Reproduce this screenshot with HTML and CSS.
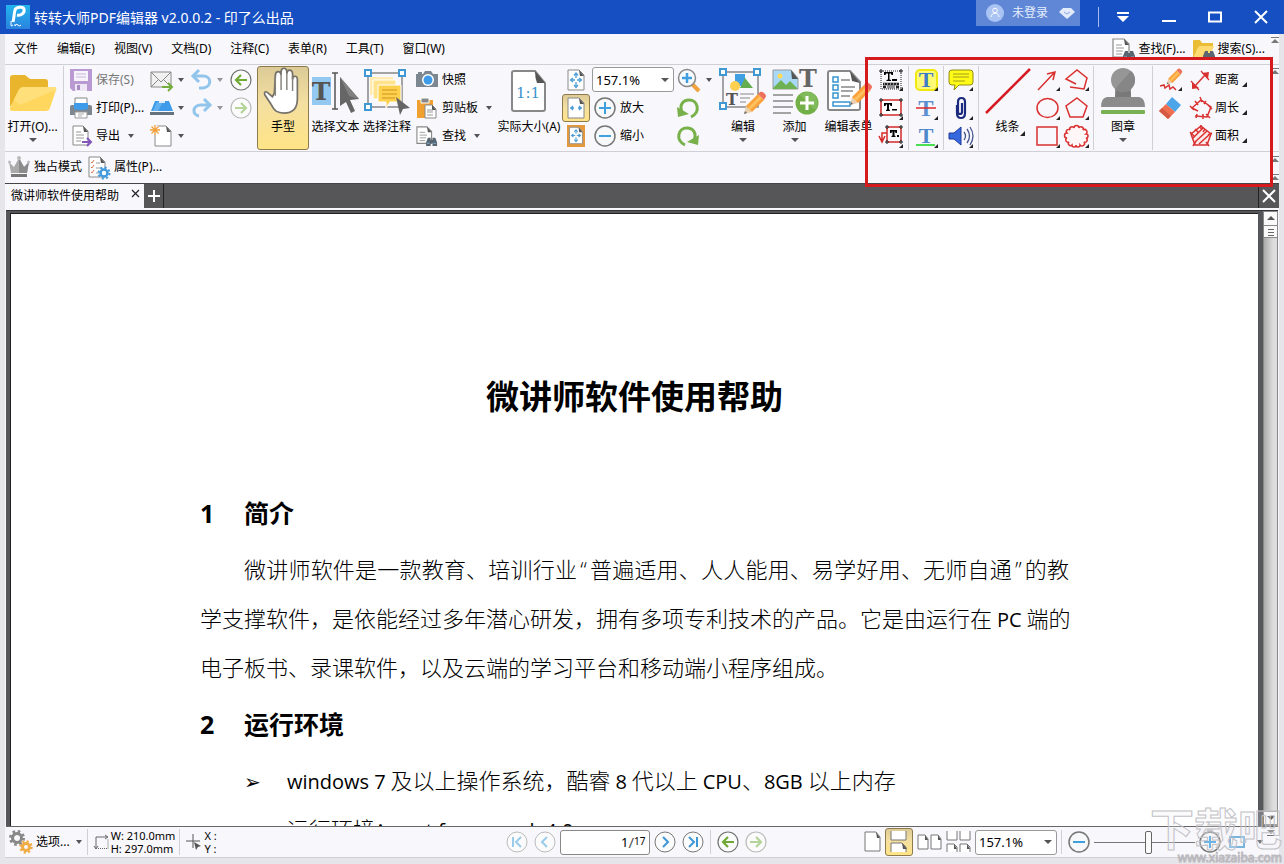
FILE: index.html
```html
<!DOCTYPE html>
<html lang="zh-CN">
<head>
<meta charset="utf-8">
<title>转转大师PDF编辑器</title>
<link rel="stylesheet" href="styles.css">
</head>
<body>
<svg class="defs" aria-hidden="true">
  <symbol id="tri" viewBox="0 0 5 5"><path d="M5 0v5H0z" fill="#222"/></symbol>
  <symbol id="circle-left" viewBox="0 0 22 22"><circle cx="11" cy="11" r="10" fill="#fbfbfc" stroke="#6f7470" stroke-width="1.2"/><path d="M17 11H6M11 6l-5 5 5 5" fill="none" stroke="#6faa35" stroke-width="2.2"/></symbol>
  <symbol id="circle-right" viewBox="0 0 22 22"><circle cx="11" cy="11" r="10" fill="#fbfbfc" stroke="#b9bbb9" stroke-width="1.2"/><path d="M5 11h11M11 6l5 5-5 5" fill="none" stroke="#b5d49a" stroke-width="2.2"/></symbol>
  <symbol id="plus" viewBox="0 0 22 22"><circle cx="11" cy="11" r="10" fill="#f7f8fa" stroke="#777" stroke-width="1.5"/><path d="M11 5v12M5 11h12" stroke="#3f9fdf" stroke-width="2"/></symbol>
  <symbol id="minus" viewBox="0 0 22 22"><circle cx="11" cy="11" r="10" fill="#f7f8fa" stroke="#777" stroke-width="1.5"/><path d="M5 11h12" stroke="#3f9fdf" stroke-width="2"/></symbol>
  <symbol id="find" viewBox="0 0 24 22"><path d="M1 1h11l5 5v13H1z" fill="#fff" stroke="#888" stroke-width="1.2"/><path d="M12 1l5 6h-4z" fill="#555"/><path d="M4 7h6M4 10h8M4 13h7M4 16h6" stroke="#999"/><path d="M13 13h3v2h2v-2h3l2 5v4h-5v-3h-2v3h-5v-4z" fill="#596671"/><path d="M12 19h3M19 19h3" stroke="#7fb2df"/></symbol>
  <symbol id="chev" viewBox="0 0 8 7"><path d="M0 .5h8" stroke="#777"/><path d="M4 2l4 4H0z" fill="#777"/></symbol>
  <symbol id="pencil" viewBox="0 0 24 24"><path d="M1 23l2-8 6 6z" fill="#ead0b0"/><path d="M1 23l1-3 2 2z" fill="#666"/><path d="M3 15L15 3l6 6L9 21z" fill="#f9a33d"/><path d="M5 17L17 5l2 2L7 19z" fill="#ffc05f"/><path d="M15 3l2-2q2-1 4 1l1 1q2 2 0 4l-1 2z" fill="#ed715d"/></symbol>
  <symbol id="fitpage" viewBox="0 0 22 22"><path d="M3 1h11l5 5v15H3z" fill="#fff" stroke="#888"/><path d="M14 1l5 6h-4z" fill="#555"/><path d="M11 5v4M11 13v5M6 11h4M12 11h4" stroke="#4a9cd3" stroke-width="1.300"/><path d="M9 6.500l2-2.500 2 2.500M9 16l2 2.500 2-2.500M8 9l-2.500 2L8 13M14 9l2.500 2-2.500 2" fill="none" stroke="#4a9cd3" stroke-width="1.300"/></symbol>
</svg>

<header class="titlebar">
  <svg class="logo" width="24" height="24" viewBox="0 0 24 24"><defs><linearGradient id="lg" x2="0" y2="1"><stop stop-color="#23b4ee"/><stop offset="1" stop-color="#2a83df"/></linearGradient></defs><path d="M0 0h24v24H0z" fill="url(#lg)"/><path d="M7 17C8 13 8 9 9 5c1-3 8-4 9-1 1 4-3 7-7 6" fill="none" stroke="#fff" stroke-width="3"/><path d="M5 16v4q0 2 2 0M9 21v-2M9 21q2-3 3-1t3 0" fill="none" stroke="#fff"/></svg>
  <h1 class="app-title">转转大师PDF编辑器 v2.0.0.2 - 印了么出品</h1>
  <button class="user"><svg width="18" height="18" viewBox="0 0 18 18"><circle cx="9" cy="9" r="9" fill="#a9c3f3"/><circle cx="9" cy="6.500" r="2.300" fill="none" stroke="#fff"/><path d="M5 13c0-5 8-5 8 0" fill="none" stroke="#fff"/></svg><span>未登录</span><svg width="16" height="12" viewBox="0 0 16 12"><path d="M4 1h8l4 4-8 7-8-7z" fill="#e2ebfb"/><path d="M5 5l3 2 3-2" fill="none" stroke="#86a6e2"/></svg></button>
  <i class="title-sep"></i>
  <button class="win" aria-label="菜单"><svg width="14" height="12"><path d="M1 1h12v2H1zM1 5h12l-6 6z" fill="#fff"/></svg></button>
  <button class="win" aria-label="最小化"><svg width="14" height="12"><path d="M0 9h14v2H0z" fill="#fff"/></svg></button>
  <button class="win" aria-label="最大化"><svg width="14" height="12"><path d="M1 1.500h12v9H1z" fill="none" stroke="#fff" stroke-width="2"/></svg></button>
  <button class="win" aria-label="关闭"><svg width="14" height="14"><path d="M1 1l12 12M13 1L1 13" stroke="#fff" stroke-width="2"/></svg></button>
</header>

<main class="frame">
  <nav class="menubar">
    <button>文件</button><button>编辑(E)</button><button>视图(V)</button><button>文档(D)</button><button>注释(C)</button><button>表单(R)</button><button>工具(T)</button><button>窗口(W)</button>
    <div class="menu-right">
      <button><svg width="24" height="22"><use href="#find"/></svg>查找(F)...</button>
      <button><svg width="24" height="22" viewBox="0 0 24 22"><path d="M1 3q0-1 1-1h6l2 3h11v5H6L2 19H1z" fill="#ebbd36"/><path d="M7 8h15l-4 11H2z" fill="#ffda70"/><path d="M13 13h3v2h2v-2h3l2 5v4h-5v-3h-2v3h-5v-4z" fill="#596671"/></svg>搜索(S)...</button>
      <svg class="menu-chev" width="8" height="7"><use href="#chev"/></svg>
    </div>
  </nav>

  <section class="toolbar">
    <div class="cell sep"><button class="big open"><svg width="48" height="44" viewBox="0 0 48 44"><path d="M1 9q0-3 3-3h12l5 4h15q3 0 3 3v8H12L1 38z" fill="#e9b52c"/><path d="M14 18h31q3 0 2 3l-6 18q-1 3-4 3H4q-4 0-3-3L9 22q2-4 5-4z" fill="#ffd75e"/><path d="M14 18h31q3 0 2 3L11 36 5 31l5-10q2-3 4-3z" fill="#ffdf79"/></svg><span>打开(O)...</span><i class="down"></i></button></div>

    <div class="cell pad6">
      <button class="row muted"><svg width="22" height="22" viewBox="0 0 22 22"><path d="M0 0h22v22H3l-3-3z" fill="#b99ad2"/><path d="M4 2h14v10H4z" fill="#f7f3fa"/><path d="M6 5h10M6 8h10" stroke="#c9b8d9"/><path d="M5 15h12v7H5z" fill="#eee6f4"/><path d="M7 16h3v5H7z" fill="#a88bc3"/></svg>保存(S)</button>
      <button class="row"><svg width="22" height="22" viewBox="0 0 22 22"><path d="M5 1h12v7H5z" fill="#fff" stroke="#888"/><path d="M2 8h18q2 0 2 2v8H0v-8q0-2 2-2z" fill="#7d8791"/><path d="M4 6h14v6q-7 2-14 0z" fill="#3d9be9"/><path d="M5 15h12v6H5z" fill="#fff" stroke="#999"/><path d="M8 17h6M8 19h4" stroke="#aaa"/></svg>打印(P)...</button>
      <button class="row"><svg width="22" height="22" viewBox="0 0 22 22"><path d="M3 1h10l5 5v14H3z" fill="#fff" stroke="#888"/><path d="M13 1l5 6h-4z" fill="#555"/><path d="M6 7h5M6 10h8M6 13h8M6 16h5" stroke="#999"/><path d="M12 17h8M17 13l4 4-4 4" fill="none" stroke="#8155b9" stroke-width="2"/></svg>导出<i class="down"></i></button>
    </div>
    <div class="cell pad3">
      <button class="row wide" aria-label="邮件"><svg width="24" height="22" viewBox="0 0 24 22"><path d="M1 3h20v15H1z" fill="#f1f1f1" stroke="#888"/><path d="M1 3l10 10L21 3M1 18l8-8M21 18l-8-8" fill="none" stroke="#888"/><path d="M12 18h9M18 14l4 4-4 4" fill="none" stroke="#73ad3d" stroke-width="2"/></svg><i class="down"></i></button>
      <button class="row wide" aria-label="扫描"><svg width="24" height="22" viewBox="0 0 24 22"><path d="M5 4h14l4 10H1z" fill="#3d9be9"/><path d="M7 5h6L8 14H3z" fill="#63b1ef"/><path d="M9 5h6" stroke="#d9ecfb" stroke-width="2"/><path d="M0 15h24v3H0z" fill="#65737f"/></svg><i class="down"></i></button>
      <button class="row wide" aria-label="新建"><svg width="24" height="22" viewBox="0 0 24 22"><path d="M5 1h11l5 5v15H5z" fill="#fff" stroke="#888"/><path d="M16 1l5 6h-4z" fill="#555"/><circle cx="5" cy="5" r="5" fill="#f8f7fb"/><path d="M5 0v10M0 5h10M1.500 1.500l7 7M8.500 1.500l-7 7" stroke="#efa13b" stroke-width="1.300"/></svg><i class="down"></i></button>
    </div>
    <div class="cell pad3">
      <button class="row wide pale" aria-label="撤销"><svg width="22" height="22" viewBox="0 0 22 22"><path d="M3 7h9c9 0 9 11 0 12H8" fill="none" stroke="#92c5ec" stroke-width="3"/><path d="M8 1L2 7l6 6" fill="none" stroke="#92c5ec" stroke-width="3"/></svg><i class="down"></i></button>
      <button class="row wide pale" aria-label="重做"><svg width="22" height="22" viewBox="0 0 22 22"><path d="M18 8h-8C1 8 1 18 8 19" fill="none" stroke="#92c5ec" stroke-width="3"/><path d="M13 2l6 6-6 6" fill="none" stroke="#92c5ec" stroke-width="3"/></svg><i class="down"></i></button>
    </div>
    <div class="cell pad2">
      <button class="row" aria-label="后退"><svg width="22" height="22"><use href="#circle-left"/></svg></button>
      <button class="row" aria-label="前进"><svg width="22" height="22"><use href="#circle-right"/></svg></button>
    </div>

    <div class="cell"><button class="big on"><svg width="44" height="48" viewBox="0 0 44 48"><path d="M11 30L5 25q-3-1-2 3l6 9c4 8 7 10 14 10 9 0 14-5 14-15V12c0-5-5-4-5 0V6c0-5-6-5-6 0V4c0-5-6-5-6 0v3c-1-5-6-4-6 1l-1 18z" fill="#fff" stroke="#77736b" stroke-width="1.800"/><path d="M20 6v17M26 5v18M32 9v15M14 9v20" stroke="#85827c" stroke-width="1.500"/></svg><span>手型</span></button></div>
    <div class="cell"><button class="big"><svg width="48" height="44" viewBox="0 0 48 44"><path d="M0 8h19v28H0z" fill="#93c8f0"/><text x="9" y="31" class="slab" font-size="25" font-weight="bold" text-anchor="middle" fill="#555">T</text><path d="M20 4h6M20 40h6M23 4v36" stroke="#555" stroke-width="1.500"/><path d="M28 8l19 22-9 1 5 11-4 2-5-11-6 4z" fill="#666"/><path d="M28 8l19 22-10-3z" fill="#808080"/></svg><span>选择文本</span></button></div>
    <div class="cell"><button class="big"><svg width="48" height="44" viewBox="0 0 48 44"><path d="M5 4h34v34H5z" fill="none" stroke="#888" stroke-width="1.500"/><path d="M7 8h23v18H7z" fill="#ffecae"/><path d="M10 11h23v19H10z" fill="#ffe28a" stroke="#fff"/><path d="M15 16h23v17H27l-4 6v-6h-8z" fill="#fdd04e" stroke="#fff"/><path d="M19 21h15M19 25h15M19 29h13" stroke="#e0a72e" stroke-width="1.500"/><path d="M2 1h6v6H2zM36 1h6v6h-6zM2 35h6v6H2z" fill="#fff" stroke="#4099d4" stroke-width="2"/><path d="M33 28l14 11-7 1-3 6z" fill="#666"/></svg><span>选择注释</span></button></div>
    <div class="cell pad3">
      <button class="row"><svg width="22" height="22" viewBox="0 0 22 22"><path d="M2 5V3h4v2h1l2-3h6l2 3h5v13H0V5z" fill="#7d8791"/><circle cx="12" cy="11" r="6" fill="#fff"/><circle cx="12" cy="11" r="4.500" fill="#3d9be9"/></svg>快照</button>
      <button class="row"><svg width="22" height="22" viewBox="0 0 22 22"><path d="M1 3h16v18H1z" fill="#f0a02f"/><path d="M5 1h8v5H5z" fill="#888" stroke="#fff"/><path d="M9 8h7l4 4v9H9z" fill="#fff" stroke="#888"/><path d="M16 8l4 5h-4z" fill="#555"/><path d="M11 13h6M11 15h6M11 18h6" stroke="#999"/></svg>剪贴板<i class="down"></i></button>
      <button class="row"><svg width="22" height="22" viewBox="0 0 24 22"><use href="#find"/></svg>查找<i class="down"></i></button>
    </div>
    <div class="cell"><button class="big"><svg width="36" height="44" viewBox="0 0 36 44"><path d="M3 2h21l10 12v26q0 2-2 2H3q-2 0-2-2V4q0-2 2-2z" fill="#fff" stroke="#888" stroke-width="2"/><path d="M24 2l10 12h-8q-2-5-2-12z" fill="#555"/><text x="17" y="29" class="slab" font-size="15" text-anchor="middle" fill="#3b94ce">1:1</text></svg><span>实际大小(A)</span></button></div>
    <div class="cell">
      <button class="fit" aria-label="适合页面"><svg width="22" height="22"><use href="#fitpage"/></svg></button>
      <button class="fit on" aria-label="适合宽度"><svg width="22" height="22" viewBox="0 0 22 22"><path d="M3 1h11l5 5v15H3z" fill="#fff" stroke="#888"/><path d="M14 1l5 6h-4z" fill="#555"/><path d="M5 11h4M13 11h4M8 9l-2 2 2 2M14 9l2 2-2 2" fill="none" stroke="#4a9cd3" stroke-width="1.300"/></svg></button>
      <button class="fit" aria-label="适合可见"><svg width="22" height="22" viewBox="0 0 22 22"><path d="M2 0h18v22H2z" fill="#e49a3c"/><use href="#fitpage" x="2" y="1" width="18" height="19"/></svg></button>
    </div>
    <div class="cell">
      <label class="combo"><select aria-label="缩放"><option>157.1%</option></select><i class="down"></i></label>
      <button class="row pad3"><svg width="22" height="22"><use href="#plus"/></svg>放大</button>
      <button class="row pad3"><svg width="22" height="22"><use href="#minus"/></svg>缩小</button>
    </div>
    <div class="cell">
      <button class="row wide" aria-label="放大镜"><svg width="26" height="24" viewBox="0 0 26 24"><path d="M16 16l7 7" stroke="#f2a23c" stroke-width="4"/><circle cx="11" cy="10" r="8.500" fill="#f8fbfe" stroke="#888" stroke-width="1.500"/><path d="M11 5v10M6 10h10" stroke="#3f9fdf" stroke-width="2.500"/></svg><i class="down"></i></button>
      <button class="row" aria-label="逆时针旋转"><svg width="26" height="22" viewBox="0 0 26 22"><path d="M6 15C3 8 7 3 13 3c9 0 12 12 2 17" fill="none" stroke="#78b04a" stroke-width="3"/><path d="M1 10l1 10 11-3z" fill="#78b04a"/></svg></button>
      <button class="row" aria-label="顺时针旋转"><svg width="26" height="22" viewBox="0 0 26 22"><path d="M18 15C21 8 17 3 11 3c-9 0-12 12-2 17" fill="none" stroke="#78b04a" stroke-width="3"/><path d="M23 10l-1 10-11-3z" fill="#78b04a"/></svg></button>
    </div>
    <div class="cell"><button class="big"><svg width="50" height="46" viewBox="0 0 50 46"><path d="M5 4h35v35H5z" fill="none" stroke="#888" stroke-width="1.500"/><path d="M17 6h10v12H17z" fill="#409ee2"/><path d="M27 10l8 10H22z" fill="#63ad4e"/><circle cx="17" cy="18" r="5" fill="#ffcf50"/><text x="14" y="37" class="slab" font-size="16" font-weight="bold" text-anchor="middle" fill="#555">T</text><path d="M22 26h14M22 30h10M22 34h6" stroke="#888"/><path d="M2 1h6v6H2zM36 1h6v6h-6zM2 35h6v6H2z" fill="#fff" stroke="#4099d4" stroke-width="2"/><use href="#pencil" x="25" y="23" width="24" height="24"/></svg><span>编辑</span><i class="down"></i></button></div>
    <div class="cell"><button class="big open"><svg width="48" height="46" viewBox="0 0 48 46"><path d="M2 2h18l7 8v11H2z" fill="#a9d8f6" stroke="#999"/><circle cx="9" cy="8" r="2.500" fill="#ffda56"/><path d="M2 20l8-8 5 5 4-4 7 7v1H2z" fill="#6db152"/><path d="M20 2l7 9h-6z" fill="#555"/><text x="37" y="19" class="slab" font-size="24" font-weight="bold" text-anchor="middle" fill="#666">T</text><path d="M2 27h20M2 33h20M2 39h20M2 45h18" stroke="#888" stroke-width="1.500"/><circle cx="36" cy="35" r="11.500" fill="#72b047"/><path d="M36 24a11 11 0 0 1 8 18l-15-15z" fill="#82bb5b"/><path d="M36 28v14M29 35h14" stroke="#fff" stroke-width="3"/></svg><span>添加</span><i class="down"></i></button></div>
    <div class="cell"><button class="big"><svg width="46" height="46" viewBox="0 0 46 46"><path d="M4 3h20l10 11v26q0 2-2 2H4q-2 0-2-2V5q0-2 2-2z" fill="#fff" stroke="#888" stroke-width="2"/><path d="M24 3l10 12-8-2z" fill="#555"/><path d="M7 9h5v5H7zM7 17h5v5H7zM7 25h5v5H7zM7 34h17v4H7z" fill="none" stroke="#3995d1" stroke-width="1.500"/><path d="M15 12h9M15 19h14M15 23h12M15 28h9" stroke="#888" stroke-width="1.500"/><use href="#pencil" x="23" y="14" width="24" height="24"/></svg><span>编辑表单</span></button></div>

    <div class="cell sep pad4">
      <button class="row" aria-label="打字机"><svg width="26" height="24" viewBox="0 0 26 24"><path d="M2 3h20v18H2z" fill="none" stroke="#222" stroke-dasharray="1 1"/><path d="M5 4h9v3h-1.500l-.5-1.500h-1.500v6l1.500.5v1H7.500v-1l1.500-.5v-6H7L6.500 7H5zM13 11h5v2h-5z"/><path d="M4 16h16M4 19h3M8 19h8M17 19h3" stroke="#222" stroke-width="2.500"/><path d="M5 16h14" stroke="#fff" stroke-dasharray="1 2"/><path d="M8 19h8" stroke="#fff"/><path d="M1 2h2v2H1zM21 2h2v2h-2z" fill="#fff" stroke="#111"/><use href="#tri" x="20" y="19" width="4" height="4"/></svg></button>
      <button class="row" aria-label="文本框"><svg width="26" height="24" viewBox="0 0 26 24"><path d="M2 4h20v15H2z" fill="#fff" stroke="#d42a2a" stroke-width="1.500"/><path d="M5 7h8v3h-1.500L11 8.500h-1v5l1 .5v1H7v-1l1-.5v-5H7L6.500 10H5zM13 13h5v1.500h-5z"/><path d="M1 3h2v2H1zM21 3h2v2h-2zM1 18h2v2H1zM21 18h2v2h-2z" fill="#fff" stroke="#111"/><use href="#tri" x="20" y="20" width="4" height="4"/></svg></button>
      <button class="row" aria-label="标注"><svg width="26" height="24" viewBox="0 0 26 24"><path d="M8 3h14v15H8zM8 9H3v8M0 12l3 6 3-6" fill="none" stroke="#d42a2a" stroke-width="1.500"/><path d="M11 6h7v3h-1.500L16 7.500h-.5v4l1 .5v1h-4v-1l1-.5v-4H13L12.500 9H11zM18 11h2v2h-2z"/><path d="M7 2h2v2H7zM21 2h2v2h-2zM7 17h2v2H7zM21 17h2v2h-2z" fill="#fff" stroke="#111"/><use href="#tri" x="20" y="20" width="4" height="4"/></svg></button>
    </div>
    <div class="cell sep pad6">
      <button class="row" aria-label="高亮"><svg width="26" height="24" viewBox="0 0 26 24"><rect x="1" y="2" width="21" height="20" rx="4" fill="#fffb76" stroke="#f0e80c" stroke-width="2"/><text x="11" y="19" class="serif" font-size="22" font-weight="bold" text-anchor="middle" fill="#3d7cc9">T</text><use href="#tri" x="19" y="19" width="4" height="4"/></svg></button>
      <button class="row" aria-label="删除线"><svg width="26" height="24" viewBox="0 0 26 24"><text x="11" y="20" class="serif" font-size="23" font-weight="bold" text-anchor="middle" fill="#5a8fd0">T</text><path d="M1 12h20" stroke="#dc2727" stroke-width="1.500"/><use href="#tri" x="19" y="20" width="4" height="4"/></svg></button>
      <button class="row" aria-label="下划线"><svg width="26" height="24" viewBox="0 0 26 24"><text x="11" y="19" class="serif" font-size="22" font-weight="bold" text-anchor="middle" fill="#4d87cc">T</text><path d="M1 21h19" stroke="#4ade52" stroke-width="2"/><use href="#tri" x="19" y="20" width="4" height="4"/></svg></button>
    </div>
    <div class="cell sep pad4">
      <button class="row" aria-label="注释"><svg width="26" height="24" viewBox="0 0 26 24"><path d="M4 2h18q3 0 3 3v9q0 3-3 3H11l-5 5 1-5H4q-3 0-3-3V5q0-3 3-3z" fill="#fffb17" stroke="#938d14"/><path d="M5 6h16M5 9h16M5 13h12" stroke="#a39c1f"/><use href="#tri" x="21" y="19" width="4" height="4"/></svg></button>
      <button class="row" aria-label="附件"><svg width="26" height="24" viewBox="0 0 26 24"><path d="M9 9v8q0 5 4 5t4-5V6q0-4-3.500-4T10 6v10q0 2 2 2t2-2V7" fill="none" stroke="#1b2a7e" stroke-width="2.200"/><use href="#tri" x="21" y="20" width="4" height="4"/></svg></button>
      <button class="row" aria-label="声音"><svg width="26" height="24" viewBox="0 0 26 24"><path d="M1 9h5l7-6v18l-7-6H1z" fill="#3568dd" stroke="#1e3a9c"/><path d="M16 8q3 4 0 8M19 5q5 7 0 14M22 3q6 9 0 18" fill="none" stroke="#46578f" stroke-width="1.300"/><use href="#tri" x="21" y="20" width="4" height="4"/></svg></button>
    </div>
    <div class="cell"><button class="big"><svg width="48" height="46" viewBox="0 0 48 46"><path d="M2 45L46 1" stroke="#d51c24" stroke-width="2.500"/></svg><span class="with-tri">线条<svg width="5" height="5"><use href="#tri"/></svg></span></button></div>
    <div class="cell">
      <button class="row" aria-label="箭头"><svg width="26" height="24" viewBox="0 0 26 24"><path d="M2 22L18 5M11 6l8-2-2 8" fill="none" stroke="#d93030" stroke-width="1.500"/><use href="#tri" x="20" y="19" width="4" height="4"/></svg></button>
      <button class="row" aria-label="椭圆"><svg width="26" height="24" viewBox="0 0 26 24"><ellipse cx="11.500" cy="12" rx="10.500" ry="9.500" fill="none" stroke="#d93030" stroke-width="1.500"/><use href="#tri" x="20" y="20" width="4" height="4"/></svg></button>
      <button class="row" aria-label="矩形"><svg width="26" height="24" viewBox="0 0 26 24"><path d="M1 3h20v18H1z" fill="none" stroke="#d93030" stroke-width="1.500"/><use href="#tri" x="20" y="20" width="4" height="4"/></svg></button>
    </div>
    <div class="cell sep">
      <button class="row" aria-label="折线"><svg width="26" height="24" viewBox="0 0 26 24"><path d="M11 16L1 11 12 2l10 8-3 11-14-2" fill="none" stroke="#d93030" stroke-width="1.500"/><use href="#tri" x="20" y="19" width="4" height="4"/></svg></button>
      <button class="row" aria-label="多边形"><svg width="26" height="24" viewBox="0 0 26 24"><path d="M12 2l10 8-4 11H5L1 10z" fill="none" stroke="#d93030" stroke-width="1.500"/><use href="#tri" x="20" y="20" width="4" height="4"/></svg></button>
      <button class="row" aria-label="云形"><svg width="26" height="24" viewBox="0 0 26 24"><path d="M9 4a2 2 0 0 1 5 0 2 2 0 0 1 4 2 2 2 0 0 1 3 4 2 2 0 0 1 0 4 2 2 0 0 1-2 4 2 2 0 0 1-4 3 2 2 0 0 1-4 0 2 2 0 0 1-4 0 2 2 0 0 1-3-3 2 2 0 0 1-2-4 2 2 0 0 1 0-5 2 2 0 0 1 3-3 2 2 0 0 1 4-2z" fill="#fff7f7" stroke="#d93030" stroke-width="1.500"/><use href="#tri" x="20" y="20" width="4" height="4"/></svg></button>
    </div>
    <div class="cell sep"><button class="big"><svg width="44" height="46" viewBox="0 0 44 46"><path d="M14 20h16v9h8q6 1 6 10H0q0-9 6-10h8z" fill="#8b8b8c"/><path d="M16 22l10-2 4 5v4H14z" fill="#79797a"/><circle cx="22" cy="12" r="12" fill="#969697"/><path d="M14 21L30 3A12 12 0 0 1 14 21z" fill="#868687"/><rect y="42" width="44" height="4" rx="1" fill="#79b154"/></svg><span>图章</span><i class="down"></i></button></div>
    <div class="cell pad6">
      <button class="row" aria-label="铅笔"><svg width="26" height="24" viewBox="0 0 26 24"><path d="M1 18l4-1 1 3 4-3 1 4 3-2 3 3" fill="none" stroke="#d93030" stroke-width="1.500"/><use href="#pencil" x="7" y="0" width="17" height="17"/><use href="#tri" x="19" y="19" width="4" height="4"/></svg></button>
      <button class="row" aria-label="橡皮"><svg width="26" height="24" viewBox="0 0 26 24"><path d="M13 1l9 8-6 7-9-8z" fill="#4ba5e8"/><path d="M7 8l9 8-7 7-9-8z" fill="#f06f50"/><path d="M3 12l9 8-3 3-9-8z" fill="#d65a43"/></svg></button>
    </div>
    <div class="cell pad2 last">
      <div class="rows">
        <button class="row measure"><svg width="22" height="22" viewBox="0 0 22 22"><path d="M5 17L15 6" stroke="#d93030" stroke-width="1.500"/><path d="M2 13l7 6-7 1zM19 3l-7 1 6 6z" fill="#d93030"/><path d="M1 12l8 9M11 2l8 9" stroke="#d93030" stroke-width="1.200"/></svg>距离<svg width="5" height="5"><use href="#tri"/></svg></button>
        <button class="row measure"><svg width="22" height="22" viewBox="0 0 22 22"><path d="M5 19l12 1 4-10-10-7-9 8 6 3M0 9l4 4M10 0l2 5M18 8l4 4M16 17l4 4M7 17l-1 4M13 17v5M5 4l3 4M16 4l-2 3" fill="none" stroke="#d93030" stroke-width="1.500"/></svg>周长<svg width="5" height="5"><use href="#tri"/></svg></button>
        <button class="row measure"><svg width="22" height="22" viewBox="0 0 22 22"><path d="M11 1l10 8-4 11H5L1 9z" fill="#fdeaea" stroke="#d93030" stroke-width="1.500"/><path d="M3 13L13 3M5 17L17 6M9 19L20 9M0 7l4 4M11 0v4M18 10l4-2M16 17l3 4M6 16l-3 5M5 4l3 3M15 4l-2 3" stroke="#d93030" stroke-width="1.500"/></svg>面积<svg width="5" height="5"><use href="#tri"/></svg></button>
      </div>
      <svg width="8" height="7"><use href="#chev"/></svg>
    </div>
  </section>

  <section class="subbar">
    <button><svg width="22" height="22" viewBox="0 0 22 22"><path d="M1 6l5 5 5-9 5 9 5-5-2 11H3z" fill="#aaa"/><path d="M11 2l5 9 5-5-2 11h-8z" fill="#8b8b8b"/><path d="M3 18h16v3H3z" fill="#777"/><circle cx="11" cy="2" r="2" fill="#bbb"/><circle cx="1.500" cy="6" r="1.500" fill="#bbb"/><circle cx="20.500" cy="6" r="1.500" fill="#bbb"/></svg>独占模式</button>
    <button><svg width="22" height="22" viewBox="0 0 22 22"><path d="M1 1h11l5 5v15H1z" fill="#fff" stroke="#888"/><path d="M12 1l5 6h-4z" fill="#555"/><path d="M3 6l1 1 2-3M3 11l1 1 2-3M3 16l1 1 2-3" fill="none" stroke="#e0784d"/><path d="M8 7h4M8 12h5M8 17h3" stroke="#999"/><circle cx="16" cy="17" r="3.500" fill="#fff" stroke="#4099dc" stroke-width="2.500"/><circle cx="16" cy="17" r="5.500" fill="none" stroke="#4099dc" stroke-width="2" stroke-dasharray="2.100 2.200"/></svg>属性(P)...</button>
    <div class="sub-chev"><svg width="8" height="7"><use href="#chev"/></svg><svg width="8" height="7"><use href="#chev"/></svg></div>
  </section>

  <div class="tabs">
    <div class="tab"><span>微讲师软件使用帮助</span><button aria-label="关闭标签"><svg width="9" height="9"><path d="M1 1l7 7M8 1L1 8" stroke="#222" stroke-width="1.200"/></svg></button></div>
    <button class="tab-add" aria-label="新建标签"><svg width="12" height="12"><path d="M6 0v12M0 6h12" stroke="#fff" stroke-width="2"/></svg></button>
    <button class="tab-close" aria-label="关闭全部"><svg width="14" height="14"><path d="M1 1l12 12M13 1L1 13" stroke="#fff" stroke-width="2"/></svg></button>
  </div>

  <div class="viewer">
    <div class="page">
      <article class="sheet">
        <h2 class="doc-title">微讲师软件使用帮助</h2>
        <h3><span>1</span>简介</h3>
        <p class="first">微讲师软件是一款教育、培训行业<span class="quote">“</span>普遍适用、人人能用、易学好用、无师自通<span class="quote">”</span>的教</p>
        <p>学支撑软件，是依能经过多年潜心研发，拥有多项专利技术的产品。它是由运行在 <b>PC</b> 端的</p>
        <p>电子板书、录课软件，以及云端的学习平台和移动端小程序组成。</p>
        <h3><span>2</span>运行环境</h3>
        <ul>
          <li><b>windows 7</b> 及以上操作系统，酷睿 <b>8</b> 代以上 <b>CPU</b>、<b>8GB</b> 以上内存</li>
          <li>运行环境：<b>.net framework 4.0</b></li>
        </ul>
      </article>
    </div>
    <div class="scroll">
      <button aria-label="向上"><svg width="8" height="5"><path d="M4 0l4 4H0z" fill="#555"/></svg></button>
      <i class="thumb"></i>
      <button class="scroll-down" aria-label="向下"><svg width="8" height="5"><path d="M0 0h8L4 4z" fill="#555"/></svg></button>
    </div>
  </div>

  <footer class="status">
    <div class="st-left">
      <button class="options"><svg width="24" height="24" viewBox="0 0 24 24"><circle cx="8" cy="8" r="4.500" fill="none" stroke="#888" stroke-width="3"/><circle cx="8" cy="8" r="6.500" fill="none" stroke="#888" stroke-width="3" stroke-dasharray="2.500 2.600"/><circle cx="17" cy="17" r="3.500" fill="none" stroke="#f1ac45" stroke-width="3"/><circle cx="17" cy="17" r="5.500" fill="none" stroke="#f1ac45" stroke-width="2.500" stroke-dasharray="2.100 2.200"/></svg>选项...<i class="down"></i></button>
      <div class="dims"><svg width="15" height="16" viewBox="0 0 15 16"><path d="M2 15V3h11M0 12l2 3 2-3M11 1l3 2-3 2" fill="none" stroke="#666"/><path d="M4 14.500h10V5" fill="none" stroke="#666" stroke-dasharray="1 1"/></svg><p>W: 210.0mm<br>H: 297.0mm</p></div>
      <div class="coords"><svg width="16" height="16" viewBox="0 0 16 16"><path d="M7 0v14M0 7h14" stroke="#555"/><path d="M8 8l7 4-3 1-2 3z" fill="#555"/></svg><p>X :<br>Y :</p></div>
    </div>
    <div class="st-mid">
      <button aria-label="首页"><svg width="22" height="22"><circle cx="11" cy="11" r="10" fill="#fbfbfc" stroke="#bbb"/><path d="M7 6v10M15 6l-5 5 5 5" fill="none" stroke="#9bcbea" stroke-width="2"/></svg></button>
      <button aria-label="上一页"><svg width="22" height="22"><circle cx="11" cy="11" r="10" fill="#fbfbfc" stroke="#bbb"/><path d="M13 6l-5 5 5 5" fill="none" stroke="#9bcbea" stroke-width="2"/></svg></button>
      <label class="pager"><input aria-label="页码" value="1"><span>/</span><small>17</small></label>
      <button aria-label="下一页"><svg width="22" height="22"><circle cx="11" cy="11" r="10" fill="#fbfbfc" stroke="#777"/><path d="M9 6l5 5-5 5" fill="none" stroke="#3d96d6" stroke-width="2"/></svg></button>
      <button aria-label="末页"><svg width="22" height="22"><circle cx="11" cy="11" r="10" fill="#fbfbfc" stroke="#777"/><path d="M7 6l5 5-5 5M15 6v10" fill="none" stroke="#3d96d6" stroke-width="2"/></svg></button>
      <i class="vsep"></i>
      <button aria-label="后退"><svg width="22" height="22"><use href="#circle-left"/></svg></button>
      <button aria-label="前进"><svg width="22" height="22"><use href="#circle-right"/></svg></button>
    </div>
    <div class="st-right">
      <button aria-label="单页"><svg width="17" height="22"><path d="M1 1h11l4 5v14H1z" fill="#fff" stroke="#777"/><path d="M12 1l4 6h-3z" fill="#555"/></svg></button>
      <button class="mode on" aria-label="连续"><svg width="18" height="22"><path d="M1 0v9h15V0M1 21v-9h11l4 4v5" fill="#fff" stroke="#777"/><path d="M12 12l5 6h-4z" fill="#555"/></svg></button>
      <button aria-label="双页"><svg width="25" height="22"><path d="M1 4h7l3 4v10H1zM14 4h7l3 4v10H14z" fill="#fff" stroke="#777"/><path d="M8 4l3 5H8zM21 4l3 5h-3z" fill="#555"/></svg></button>
      <button aria-label="双页连续"><svg width="25" height="22"><path d="M1 0v9h10V0M14 0v9h10V0M1 21v-8h7l3 3v5M14 21v-8h7l3 3v5" fill="#fff" stroke="#777"/><path d="M8 13l3 5H8zM21 13l3 5h-3z" fill="#555"/></svg></button>
      <label class="combo"><select aria-label="缩放比例"><option>157.1%</option></select><i class="down"></i></label>
      <i class="vsep"></i>
      <button aria-label="缩小"><svg width="22" height="22"><use href="#minus"/></svg></button>
      <input class="slider" type="range" aria-label="缩放滑块" value="54">
      <button aria-label="放大"><svg width="22" height="22"><use href="#plus"/></svg></button>
      <button class="region" aria-label="选区"><svg width="16" height="12"><path d="M1 1h14v10H1z" fill="none" stroke="#79b4df" stroke-width="2"/></svg></button>
      <i class="down"></i>
      <svg class="st-chev" width="8" height="7"><path d="M0 1h8L4 5z" fill="#777"/><path d="M0 6.500h8" stroke="#777"/></svg>
    </div>
  </footer>
</main>

<div class="mark"></div>
<div class="stamp"><b>下载吧</b><span>www.xiazaiba.com</span></div>
</body>
</html>
```

FILE: styles.css
```css
* { box-sizing: border-box; }
html, body { height: 100%; margin: 0; }
body {
  display: flex;
  flex-direction: column;
  position: relative;
  overflow: hidden;
  background: #e6e5e9;
  color: #000;
  font: 12px/18px "Noto Sans", "Noto Sans CJK SC", sans-serif;
}
button, input, select { font: inherit; color: inherit; border: 0; background: none; padding: 0; margin: 0; }
button { display: flex; align-items: center; white-space: nowrap; }
svg { display: block; flex: none; overflow: visible; }
p { margin: 0; }
.defs { position: absolute; width: 0; height: 0; }
.serif { font-family: "Liberation Serif", serif; }
.slab { font-family: "DejaVu Serif", serif; }
.down { flex: none; width: 0; height: 0; border: 3px solid transparent; border-top: 4px solid #555; border-bottom: 0; }

.titlebar { display: flex; flex: none; height: 34px; background: #164fc2; color: #fff; }
.logo { margin: 5px 4px 0 6px; }
.app-title { flex: 1; margin: 0; font-size: 14px; font-weight: 400; line-height: 35px; }
.user { height: 26px; width: 104px; padding-left: 10px; background: #5f87d6; color: #e6eefc; gap: 8px; }
.user svg:last-child { margin-left: 3px; }
.title-sep { width: 1px; height: 20px; margin: 7px 1px 0 18px; background: #a5bdea; }
.win { width: 46px; height: 34px; justify-content: center; }

.frame { display: flex; flex: 1; flex-direction: column; min-height: 0; margin: 0 5px 6px; background: #f8f7fb; }
.menubar { display: flex; flex: none; gap: 19px; height: 31px; padding-left: 9px; border-bottom: 1px solid #d0d0d4; }
.menubar button { height: 30px; }
.menu-right { display: flex; gap: 6px; margin-left: auto; }
.menu-right button { gap: 2px; }
.menu-chev { margin-top: 3px; }

.toolbar {
  display: grid;
  flex: none;
  grid-template-columns: 59px 83px 41px 40px 28px 54px 51px 52px 83px 66px 29px 85px 40px 54px 52px 53px 34px 35px 35px 57px 29px 29px 59px 35px 1fr;
  height: 87px;
  padding: 1px 0;
  border-bottom: 1px solid #d0d0d4;
}
.cell { display: flex; flex-direction: column; min-width: 0; }
.sep { border-right: 1px solid #d0d0d4; }
.pad2 { padding-left: 2px; }
.pad3 { padding-left: 3px; }
.pad4 { padding-left: 4px; }
.pad6 { padding-left: 6px; }
.row { height: 28px; gap: 4px; }
.row.pad3 { padding-left: 3px; }
.row .down { margin-left: 4px; }
.wide { gap: 0; }
.muted { color: #777; }
.pale .down { opacity: .6; }
.big { position: relative; flex-direction: column; width: 100%; height: 84px; padding-top: 2px; }
.big.open { padding-right: 3px; }
.big > svg { height: 46px; }
.big span { margin-top: 4px; }
.big .down { margin-top: 2px; border-width: 4px 4px 0; }
.big.on { width: 52px; margin: 0 1px; padding-top: 1px; }
.on { border: 1px solid #8d7b4d; border-radius: 3px; background: linear-gradient(#dccb97, #f4dfa0 45%, #ffe486); }
.with-tri { display: flex; align-items: flex-end; margin-left: 5px; }
.fit { justify-content: center; width: 28px; height: 28px; }
.combo { display: flex; align-items: center; position: relative; width: 82px; height: 25px; margin: 1px 0 2px 1px; border: 1px solid #999; border-radius: 3px; background: #fff; }
.combo select { appearance: none; width: 100%; height: 100%; padding-left: 3px; font-size: 13px; }
.combo .down { position: absolute; right: 4px; border-width: 4px 4px 0; pointer-events: none; }
.last { flex-direction: row; justify-content: space-between; }
.last > svg { margin-top: 2px; }
.measure { gap: 3px; }
.measure svg:last-child { align-self: flex-end; margin-bottom: 7px; }

.subbar { display: flex; flex: none; gap: 6px; height: 32px; padding: 0 0 2px 3px; border-bottom: 1px solid #444; }
.subbar button { gap: 4px; }
.sub-chev { display: flex; flex-direction: column; justify-content: space-between; margin-left: auto; padding: 4px 0 0; }

.tabs { display: flex; flex: none; height: 24px; background: #565659; }
.tab { display: flex; justify-content: space-between; width: 139px; padding: 0 4px 0 6px; background: #f8f7fb; line-height: 24px; }
.tab button { height: 18px; }
.tab-add { justify-content: center; width: 20px; border-right: 1px solid #222; }
.tab-close { justify-content: center; width: 21px; margin-left: auto; border-left: 1px solid #222; }

.viewer { display: flex; flex: 1; min-height: 0; margin: 2px 1px 0; background: #55565a; border-top: 1px solid #333; border-bottom: 1px solid #666; }
.page { flex: 1; overflow: hidden; margin: 2px 5px 0 4px; border-left: 1px solid #222; border-top: 1px solid #222; background: #fff; }
.sheet { max-width: 869px; margin: 0 auto; padding-top: 158px; font-family: "Noto Sans", "Noto Sans CJK SC", sans-serif; }
.doc-title { margin: 0 0 64px; font-size: 33px; line-height: 50px; text-align: center; }
.sheet h3 { display: flex; margin: 6px 0 4px; font-size: 25px; line-height: 54px; }
.sheet h3 span { width: 44px; }
.sheet p, .sheet li { height: 49px; font-family: "Noto Sans CJK SC", sans-serif; font-size: 22px; font-weight: 300; line-height: 49px; white-space: nowrap; }
.sheet .first { padding-left: 44px; text-align: justify; text-align-last: justify; white-space: normal; }
.quote { padding: 0 3px; font-family: "Open Sans", sans-serif; line-height: 20px; }
.sheet b { font-family: "Open Sans", sans-serif; font-size: 20px; font-weight: 500; line-height: 20px; }
.sheet ul { margin: 0; padding: 0; list-style: none; }
.sheet li { display: block; padding-left: 44px; }
.sheet li::before { content: "➢"; display: inline-block; width: 43px; font: 20px/20px "DejaVu Sans", sans-serif; }

.scroll { display: flex; flex-direction: column; width: 15px; border: 1px solid #888; background: linear-gradient(90deg, #aaa, #ddd 70%); }
.scroll button { justify-content: center; height: 14px; background: #fafafa; border-bottom: 1px solid #888; }
.thumb { height: 12px; border-bottom: 1px solid #888; background: repeating-linear-gradient(#666 0 1px, #fafafa 1px 3px) 50% 3px / 6px 7px no-repeat #fafafa; }
.scroll .scroll-down { margin-top: auto; border-top: 1px solid #888; }

.status { display: grid; flex: none; grid-template-columns: 1fr auto 1fr; height: 31px; border-bottom: 1px solid #d0d0d4; }
.st-left, .st-mid, .st-right { display: flex; align-items: center; }
.options { gap: 3px; padding: 0 5px 0 4px; height: 26px; border-right: 1px solid #d0d0d4; }
.options .down { margin: 0 0 0 3px; }
.dims, .coords { display: flex; align-items: center; gap: 2px; padding: 0 4px 0 6px; font-size: 11px; line-height: 13px; }
.dims { border-right: 1px solid #d0d0d4; }
.st-mid { gap: 6px; padding-right: 12px; }
.pager { display: flex; align-items: center; width: 90px; height: 25px; margin: 0 -2px; padding: 0 3px; border: 1px solid #888; border-radius: 3px; background: #fff; }
.pager input { flex: 1; width: 20px; text-align: right; font-size: 13px; }
.pager small { font-size: 10px; line-height: 20px; align-self: flex-start; }
.pager span { font-size: 15px; color: #555; }
.vsep { width: 1px; height: 24px; background: #d0d0d4; }
.st-right { justify-content: flex-end; gap: 4px; padding-right: 4px; }
.mode { justify-content: center; width: 28px; height: 28px; }
.st-right .combo { margin: 0; }
.st-right .vsep { margin-right: 2px; }
.slider { appearance: none; width: 101px; height: 22px; background: linear-gradient(#777, #777) 50% 50% / 100% 1px no-repeat; }
.slider::-webkit-slider-thumb { appearance: none; width: 7px; height: 23px; border: 1px solid #666; border-radius: 2px; background: #fafafa; }
.region { margin: 0 8px 0 4px; }
.st-chev { align-self: flex-start; margin-top: 2px; }

.mark { position: absolute; top: 57px; right: 11px; width: 408px; height: 130px; border: 3px solid #d41a1c; pointer-events: none; }
.stamp { display: flex; flex-direction: column; align-items: flex-end; position: absolute; right: 2px; bottom: 0; color: #f2f1f544; font-family: "Noto Sans", "Noto Sans CJK SC", sans-serif; pointer-events: none; }
.stamp b { font-size: 44px; line-height: 46px; -webkit-text-stroke: 1px #c2c1c6; }
.stamp span { font-size: 12px; line-height: 12px; -webkit-text-stroke: 1px #bbbabf; }
```
